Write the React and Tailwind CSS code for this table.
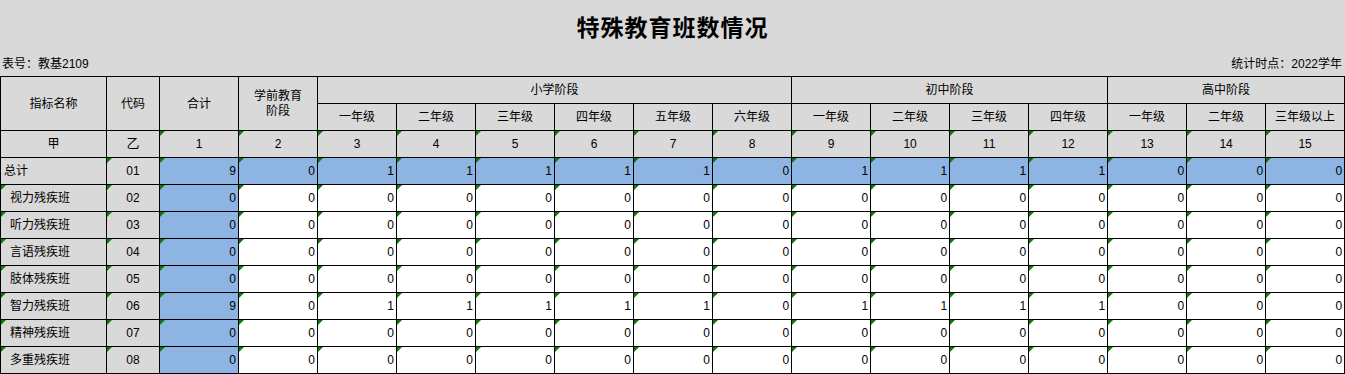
const grades = [
  "一年级", "二年级", "三年级", "四年级", "五年级", "六年级",
  "一年级", "二年级", "三年级", "四年级",
  "一年级", "二年级", "三年级以上",
];

const rows = [
  { name: "总计", code: "01", total: true, values: [9, 0, 1, 1, 1, 1, 1, 0, 1, 1, 1, 1, 0, 0, 0] },
  { name: "视力残疾班", code: "02", values: Array(15).fill(0) },
  { name: "听力残疾班", code: "03", values: Array(15).fill(0) },
  { name: "言语残疾班", code: "04", values: Array(15).fill(0) },
  { name: "肢体残疾班", code: "05", values: Array(15).fill(0) },
  { name: "智力残疾班", code: "06", values: [9, 0, 1, 1, 1, 1, 1, 0, 1, 1, 1, 1, 0, 0, 0] },
  { name: "精神残疾班", code: "07", values: Array(15).fill(0) },
  { name: "多重残疾班", code: "08", values: Array(15).fill(0) },
];

function Mark() {
  return (
    <span className="absolute top-0 left-0 w-0 h-0 border-t-[5px] border-t-[#0a7a0a] border-r-[5px] border-r-transparent" />
  );
}

const th = "border border-black bg-[#d9d9d9] font-normal text-center align-middle p-0";
const td = "relative border border-black p-0 align-middle";

export default function App() {
  return (
    <div
      className="w-[1345px] h-[374px] bg-[#d9d9d9] text-black text-[12px] overflow-hidden"
      style={{ fontFamily: '"Liberation Sans", "Noto Sans CJK SC", sans-serif' }}
    >
      <div className="h-[52px] flex items-center justify-center">
        <h1 className="text-[23px] font-bold tracking-[1px]" style={{ fontFamily: '"Noto Sans CJK SC", serif' }}>
          特殊教育班数情况
        </h1>
      </div>
      <div className="h-[24px] flex items-center justify-between pl-[2px] pr-[3px]">
        <span>表号：教基2109</span>
        <span>统计时点：2022学年</span>
      </div>
      <table className="table-fixed border-collapse w-[1345px]">
        <colgroup>
          <col className="w-[106px]" />
          <col className="w-[53px]" />
          {Array.from({ length: 15 }).map((_, i) => (
            <col key={i} className="w-[79px]" />
          ))}
        </colgroup>
        <thead>
          <tr className="h-[27px]">
            <th rowSpan={2} className={th}>指标名称</th>
            <th rowSpan={2} className={th}>代码</th>
            <th rowSpan={2} className={th}>合计</th>
            <th rowSpan={2} className={`${th} leading-[15px]`}>
              学前教育
              <br />
              阶段
            </th>
            <th colSpan={6} className={th}>小学阶段</th>
            <th colSpan={4} className={th}>初中阶段</th>
            <th colSpan={3} className={th}>高中阶段</th>
          </tr>
          <tr className="h-[27px]">
            {grades.map((g, i) => (
              <th key={i} className={th}>{g}</th>
            ))}
          </tr>
          <tr className="h-[27px]">
            <th className={th}>甲</th>
            <th className={`${th} text-[13px]`}>乙</th>
            {Array.from({ length: 15 }).map((_, i) => (
              <th key={i} className={`${th} relative`}>
                <Mark />
                {i + 1}
              </th>
            ))}
          </tr>
        </thead>
        <tbody>
          {rows.map((r) => (
            <tr key={r.code} className="h-[27px]">
              <td className={`${td} bg-[#d9d9d9] text-left ${r.total ? "pl-[3px]" : "pl-[9px]"}`}>
                {!r.total && <Mark />}
                {r.name}
              </td>
              <td className={`${td} bg-[#d9d9d9] text-center`}>
                <Mark />
                {r.code}
              </td>
              {r.values.map((v, i) => (
                <td
                  key={i}
                  className={`${td} text-right pr-[2px] ${r.total || i === 0 ? "bg-[#8db4e2]" : "bg-white"}`}
                >
                  <Mark />
                  {v}
                </td>
              ))}
            </tr>
          ))}
        </tbody>
      </table>
    </div>
  );
}
